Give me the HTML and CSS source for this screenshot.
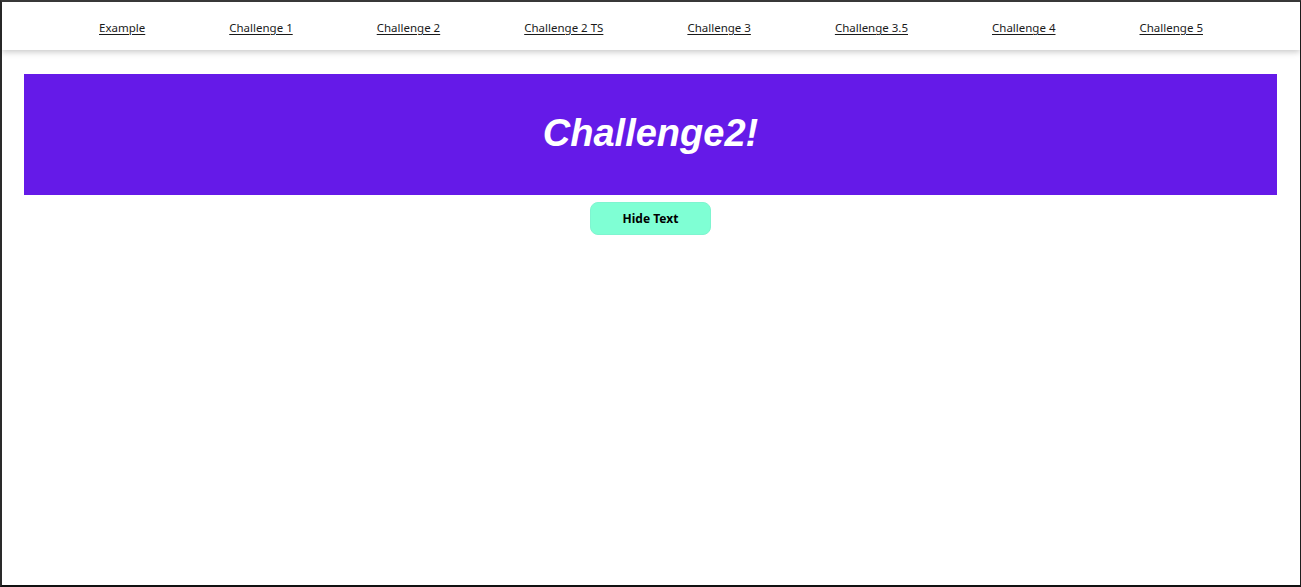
FILE: index.html
```html
<!DOCTYPE html>
<html>
<head>
<meta charset="utf-8">
<link rel="stylesheet" href="styles.css">
</head>
<body>
<div class="frame">
  <nav class="nav">
    <a href="#">Example</a>
    <a href="#">Challenge 1</a>
    <a href="#">Challenge 2</a>
    <a href="#">Challenge 2 TS</a>
    <a href="#">Challenge 3</a>
    <a href="#">Challenge 3.5</a>
    <a href="#">Challenge 4</a>
    <a href="#">Challenge 5</a>
  </nav>
  <main class="main">
    <header class="banner"><h1>Challenge2!</h1></header>
    <button class="btn">Hide Text</button>
  </main>
</div>
</body>
</html>
```

FILE: styles.css
```css
html, body { margin: 0; padding: 0; background: #fff; }
.frame {
  box-sizing: border-box;
  height: 100vh;
  border: 1px solid #1e1e1e;
  border-top: 2px solid #3a3a3a;
  border-left: 2px solid #2a2a2a;
  border-bottom: 2px solid #111;
  font-family: "Noto Sans", "Open Sans", sans-serif;
}
.nav {
  height: 48px;
  display: flex;
  justify-content: center;
  align-items: center;
  gap: 84px;
  box-shadow: 0 2px 6px rgba(0,0,0,0.22);
  padding-top: 3px;
  box-sizing: border-box;
}
.nav a {
  color: #1a1a1a;
  font-size: 11.5px;
  text-decoration: underline;
  text-underline-offset: 2px;
}
.main {
  padding: 24px 23px 0 22px;
  display: flex;
  flex-direction: column;
  align-items: center;
}
.banner {
  align-self: stretch;
  height: 121px;
  background: #651ae8;
  display: flex;
  justify-content: center;
  align-items: center;
}
.banner h1 {
  margin: 0;
  color: #fff;
  font-family: "Liberation Sans", Arial, sans-serif;
  font-style: italic;
  font-weight: bold;
  font-size: 38px;
  padding-bottom: 2px;
}
.btn {
  margin-top: 7px;
  width: 121px;
  height: 33px;
  background: #7fffd4;
  border: 1px solid #7ff5d0;
  border-radius: 8px;
  font-family: "Noto Sans", "Open Sans", sans-serif;
  font-weight: bold;
  font-size: 12px;
  color: #000;
  padding: 0;
}
```
